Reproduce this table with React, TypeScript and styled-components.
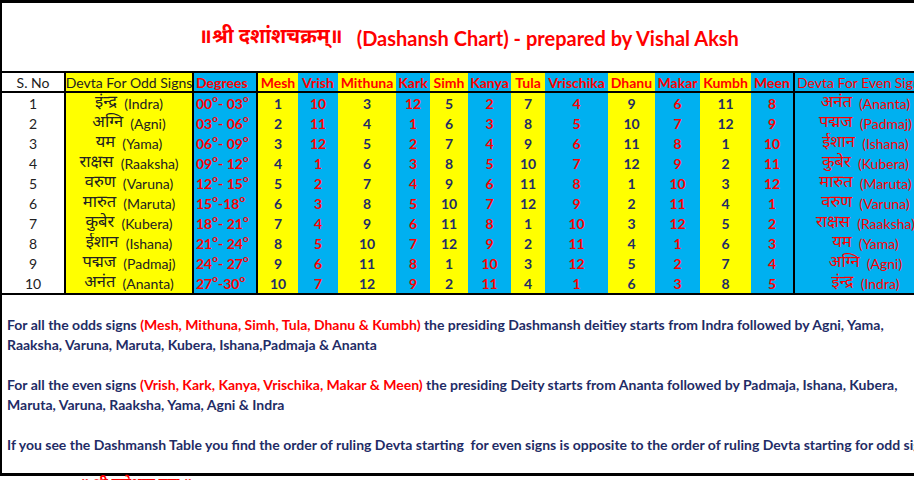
import styled, { createGlobalStyle } from 'styled-components';

const GlobalStyle = createGlobalStyle`
  html, body {
    margin: 0;
    padding: 0;
    background: #ffffff;
    overflow: hidden;
  }
  body {
    font-family: Lato, 'Noto Sans', 'Noto Sans Devanagari', 'Lohit Devanagari', sans-serif;
  }
`;

const YELLOW = '#ffff00';
const BLUE = '#00b0f0';
const RED = '#ff0000';
const NAVY = '#1f2c66';

type Col = {
  name: string;
  width: number;
  bg: string;
  start?: number;
};

const signs: Col[] = [
  { name: 'Mesh', width: 40, bg: YELLOW, start: 1 },
  { name: 'Vrish', width: 40, bg: BLUE, start: 10 },
  { name: 'Mithuna', width: 58, bg: YELLOW, start: 3 },
  { name: 'Kark', width: 34, bg: BLUE, start: 12 },
  { name: 'Simh', width: 38, bg: YELLOW, start: 5 },
  { name: 'Kanya', width: 43, bg: BLUE, start: 2 },
  { name: 'Tula', width: 34, bg: YELLOW, start: 7 },
  { name: 'Vrischika', width: 63, bg: BLUE, start: 4 },
  { name: 'Dhanu', width: 47, bg: YELLOW, start: 9 },
  { name: 'Makar', width: 45, bg: BLUE, start: 6 },
  { name: 'Kumbh', width: 51, bg: YELLOW, start: 11 },
  { name: 'Meen', width: 44, bg: BLUE, start: 8 },
];

const devtas = [
  ['इंन्द्र', 'Indra'],
  ['अग्नि', 'Agni'],
  ['यम', 'Yama'],
  ['राक्षस', 'Raaksha'],
  ['वरुण', 'Varuna'],
  ['मारुत', 'Maruta'],
  ['कुबेर', 'Kubera'],
  ['ईशान', 'Ishana'],
  ['पद्मज', 'Padmaj'],
  ['अनंत', 'Ananta'],
];

const degrees = [
  ['00', ' - ', '03'],
  ['03', ' - ', '06'],
  ['06', ' - ', '09'],
  ['09', ' - ', '12'],
  ['12', ' - ', '15'],
  ['15', ' -', '18'],
  ['18', ' - ', '21'],
  ['21', ' - ', '24'],
  ['24', ' - ', '27'],
  ['27', ' -', '30'],
];

const gridColumns = ['64px', '128px', '64px', ...signs.map((s) => `${s.width}px`), '141px'].join(' ');

export default function App() {
  return (
    <>
      <GlobalStyle />
      <Sheet>
        <TitleRow>
          <Deva>॥श्री दशांशचक्रम्॥</Deva>
          <TitleLatin>(Dashansh Chart) - prepared by Vishal Aksh</TitleLatin>
        </TitleRow>

        <Table>
          <HeadCell $bg="#ffffff" $divider>S. No</HeadCell>
          <HeadCell $bg={YELLOW} $divider>Devta For Odd Signs</HeadCell>
          <HeadCell $bg={BLUE} $color={RED} $bold $divider $align="left">Degrees</HeadCell>
          {signs.map((s, i) => (
            <HeadCell key={s.name} $bg={s.bg} $color={RED} $bold $divider={i === signs.length - 1}>
              {s.name}
            </HeadCell>
          ))}
          <HeadCell $bg={BLUE} $color={RED} $align="left">Devta For Even Signs</HeadCell>

          {devtas.map((d, row) => {
            const even = devtas[devtas.length - 1 - row];
            const deg = degrees[row];
            return [
              <Cell key={`n${row}`} $bg="#ffffff" $divider>{row + 1}</Cell>,
              <Cell key={`o${row}`} $bg={YELLOW} $divider>
                <DevaName>{d[0]}</DevaName>&nbsp;&nbsp;({d[1]})
              </Cell>,
              <Cell key={`d${row}`} $bg={BLUE} $color={RED} $bold $divider $align="left">
                {deg[0]}<Sup>o</Sup>{deg[1]}{deg[2]}<Sup>o</Sup>
              </Cell>,
              ...signs.map((s, i) => (
                <Cell
                  key={`${s.name}${row}`}
                  $bg={s.bg}
                  $color={s.bg === YELLOW ? NAVY : RED}
                  $bold
                  $divider={i === signs.length - 1}
                >
                  {((s.start! - 1 + row) % 12) + 1}
                </Cell>
              )),
              <Cell key={`e${row}`} $bg={BLUE} $color={RED}>
                <DevaName>{even[0]}</DevaName>&nbsp;&nbsp;({even[1]})
              </Cell>,
            ];
          })}
        </Table>

        <Notes>
          <NoteLine>
            For all the odds signs <Hi>(Mesh, Mithuna, Simh, Tula, Dhanu &amp; Kumbh)</Hi> the presiding Dashmansh
            deitiey starts from Indra followed by Agni, Yama,
          </NoteLine>
          <NoteLine>Raaksha, Varuna, Maruta, Kubera, Ishana,Padmaja &amp; Ananta</NoteLine>
          <Blank />
          <NoteLine>
            For all the even signs <Hi>(Vrish, Kark, Kanya, Vrischika, Makar &amp; Meen)</Hi> the presiding Deity
            starts from Ananta followed by Padmaja, Ishana, Kubera,
          </NoteLine>
          <NoteLine>Maruta, Varuna, Raaksha, Yama, Agni &amp; Indra</NoteLine>
          <Blank />
          <NoteLine>
            If you see the Dashmansh Table you find the order of ruling Devta starting&nbsp; for even signs is
            opposite to the order of ruling Devta starting for odd signs
          </NoteLine>
        </Notes>
      </Sheet>
      <Footer>
        <Deva>॥ श्री गणेशाय नमः ॥</Deva>
      </Footer>
    </>
  );
}

const Sheet = styled.div`
  width: 936px;
  border-top: 3px solid #000;
  border-left: 2px solid #000;
  border-bottom: 3px solid #000;
  box-sizing: border-box;
`;

const TitleRow = styled.div`
  height: 68px;
  display: flex;
  align-items: center;
  justify-content: center;
  gap: 14px;
  color: ${RED};
  font-weight: 700;
  font-size: 20px;
  padding-top: 2px;
  box-sizing: border-box;
`;

const Deva = styled.span`
  font-family: 'Noto Sans Devanagari', 'Lohit Devanagari', 'Noto Sans', sans-serif;
  font-weight: 700;
`;

const TitleLatin = styled.span`
  white-space: nowrap;
`;

const Table = styled.div`
  display: grid;
  grid-template-columns: ${gridColumns};
  border-top: 2px solid #000;
  border-bottom: 2px solid #000;
`;

type CellProps = {
  $bg: string;
  $color?: string;
  $bold?: boolean;
  $divider?: boolean;
  $align?: 'left' | 'center';
};

const Cell = styled.div<CellProps>`
  box-sizing: border-box;
  height: 20px;
  display: flex;
  align-items: center;
  justify-content: ${({ $align }) => ($align === 'left' ? 'flex-start' : 'center')};
  padding-left: ${({ $align }) => ($align === 'left' ? '2px' : '0')};
  background: ${({ $bg }) => $bg};
  color: ${({ $color }) => $color || '#222'};
  font-weight: ${({ $bold }) => ($bold ? 700 : 400)};
  font-size: 14px;
  white-space: nowrap;
  overflow: hidden;
  border-right: ${({ $divider }) => ($divider ? '2px solid #000' : 'none')};
`;

const HeadCell = styled(Cell)`
  height: 20px;
  border-bottom: 2px solid #000;
`;

const DevaName = styled.span`
  font-family: 'Noto Sans Devanagari', 'Lohit Devanagari', 'Noto Sans', sans-serif;
  font-size: 16.5px;
  line-height: 20px;
`;

const Sup = styled.span`
  font-size: 10px;
  line-height: 0;
  position: relative;
  top: -5px;
`;

const Notes = styled.div`
  height: 178px;
  padding: 20px 0 0 5px;
  box-sizing: border-box;
  color: ${NAVY};
  font-weight: 700;
  font-size: 14px;
`;

const NoteLine = styled.div`
  height: 20px;
  line-height: 20px;
  white-space: nowrap;
`;

const Blank = styled.div`
  height: 20px;
`;

const Hi = styled.span`
  color: ${RED};
`;

const Footer = styled.div`
  padding-left: 80px;
  margin-top: -2px;
  color: ${RED};
  font-size: 14px;
`;
